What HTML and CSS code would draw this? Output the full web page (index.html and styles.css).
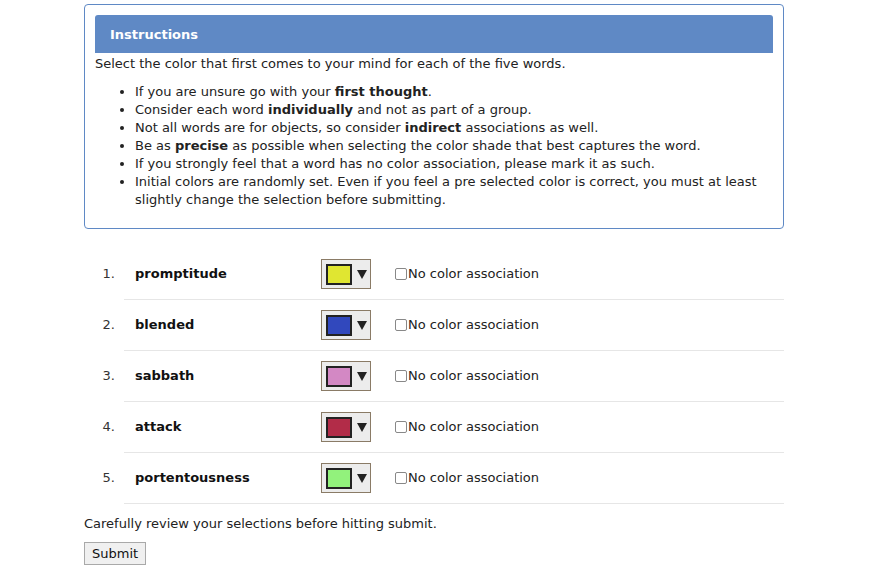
FILE: index.html
```html
<!DOCTYPE html>
<html>
<head>
<meta charset="utf-8">
<link rel="stylesheet" href="styles.css">
</head>
<body>
<div class="page">
  <div class="instructions">
    <div class="inst-head">Instructions</div>
    <p class="lead">Select the color that first comes to your mind for each of the five words.</p>
    <ul class="rules">
      <li>If you are unsure go with your <b>first thought</b>.</li>
      <li>Consider each word <b>individually</b> and not as part of a group.</li>
      <li>Not all words are for objects, so consider <b>indirect</b> associations as well.</li>
      <li>Be as <b>precise</b> as possible when selecting the color shade that best captures the word.</li>
      <li>If you strongly feel that a word has no color association, please mark it as such.</li>
      <li>Initial colors are randomly set. Even if you feel a pre selected color is correct, you must at least slightly change the selection before submitting.</li>
    </ul>
  </div>

  <div class="words">
    <div class="row">
      <div class="num">1.</div>
      <div class="cell">
        <div class="word">promptitude</div>
        <div class="picker"><span class="swatch" style="background:#e0e631"></span><span class="arrow"></span></div>
        <label class="noassoc"><span class="cb"></span>No color association</label>
      </div>
    </div>
    <div class="row">
      <div class="num">2.</div>
      <div class="cell">
        <div class="word">blended</div>
        <div class="picker"><span class="swatch" style="background:#3148bd"></span><span class="arrow"></span></div>
        <label class="noassoc"><span class="cb"></span>No color association</label>
      </div>
    </div>
    <div class="row">
      <div class="num">3.</div>
      <div class="cell">
        <div class="word">sabbath</div>
        <div class="picker"><span class="swatch" style="background:#d388c4"></span><span class="arrow"></span></div>
        <label class="noassoc"><span class="cb"></span>No color association</label>
      </div>
    </div>
    <div class="row">
      <div class="num">4.</div>
      <div class="cell">
        <div class="word">attack</div>
        <div class="picker"><span class="swatch" style="background:#b22c48"></span><span class="arrow"></span></div>
        <label class="noassoc"><span class="cb"></span>No color association</label>
      </div>
    </div>
    <div class="row">
      <div class="num">5.</div>
      <div class="cell">
        <div class="word">portentousness</div>
        <div class="picker"><span class="swatch" style="background:#92f27c"></span><span class="arrow"></span></div>
        <label class="noassoc"><span class="cb"></span>No color association</label>
      </div>
    </div>
  </div>

  <p class="review">Carefully review your selections before hitting submit.</p>
  <button class="submit" type="button">Submit</button>
</div>
</body>
</html>
```

FILE: styles.css
```css
html, body {
  margin: 0;
  padding: 0;
  background: #fff;
}
body {
  font-family: "DejaVu Sans", Verdana, sans-serif;
  font-size: 13px;
  line-height: 18px;
  color: #222;
}
.page {
  width: 700px;
  margin-left: 84px;
  padding-top: 4px;
}
.instructions {
  border: 1px solid #5f89c5;
  border-radius: 4px;
  padding: 10px;
}
.inst-head {
  background: #5f89c5;
  color: #fff;
  font-weight: bold;
  height: 37px;
  padding-top: 1px;
  line-height: 38px;
  padding-left: 15px;
  padding-right: 15px;
  border-radius: 3px 3px 0 0;
}
.lead {
  margin: 2px 0 0;
}
.rules {
  margin: 10px 0 9px;
  padding-left: 40px;
}
.rules b {
  font-weight: bold;
}
.words {
  margin-top: 20px;
}
.row {
  display: flex;
}
.num {
  width: 31px;
  padding-right: 9px;
  text-align: right;
  padding-top: 16px;
  color: #333;
}
.cell {
  flex: 1;
  display: flex;
  align-items: center;
  height: 50px;
  border-bottom: 1px solid #e6e6e6;
  padding-left: 11px;
}
.word {
  width: 186px;
  font-weight: bold;
  color: #111;
}
.picker {
  box-sizing: border-box;
  width: 50px;
  height: 30px;
  border: 1px solid #8a7b66;
  background: #ececec;
  display: flex;
  align-items: center;
  padding-left: 4px;
}
.swatch {
  box-sizing: border-box;
  width: 26px;
  height: 21px;
  border: 2px solid #222;
}
.arrow {
  margin-left: 5px;
  width: 0;
  height: 0;
  border-left: 5px solid transparent;
  border-right: 5px solid transparent;
  border-top: 9px solid #222;
}
.noassoc {
  margin-left: 24px;
  display: flex;
  align-items: center;
}
.cb {
  box-sizing: border-box;
  width: 12px;
  height: 12px;
  border: 1px solid #888;
  border-radius: 2px;
  background: #fff;
  margin-right: 1px;
}
.review {
  margin: 11px 0 9px;
}
.submit {
  font-family: "DejaVu Sans", Verdana, sans-serif;
  font-size: 13px;
  color: #111;
  background: #f0f0f0;
  border: 1px solid #a9a9a9;
  height: 23px;
  padding: 0 7px;
  margin: 0;
}
```
